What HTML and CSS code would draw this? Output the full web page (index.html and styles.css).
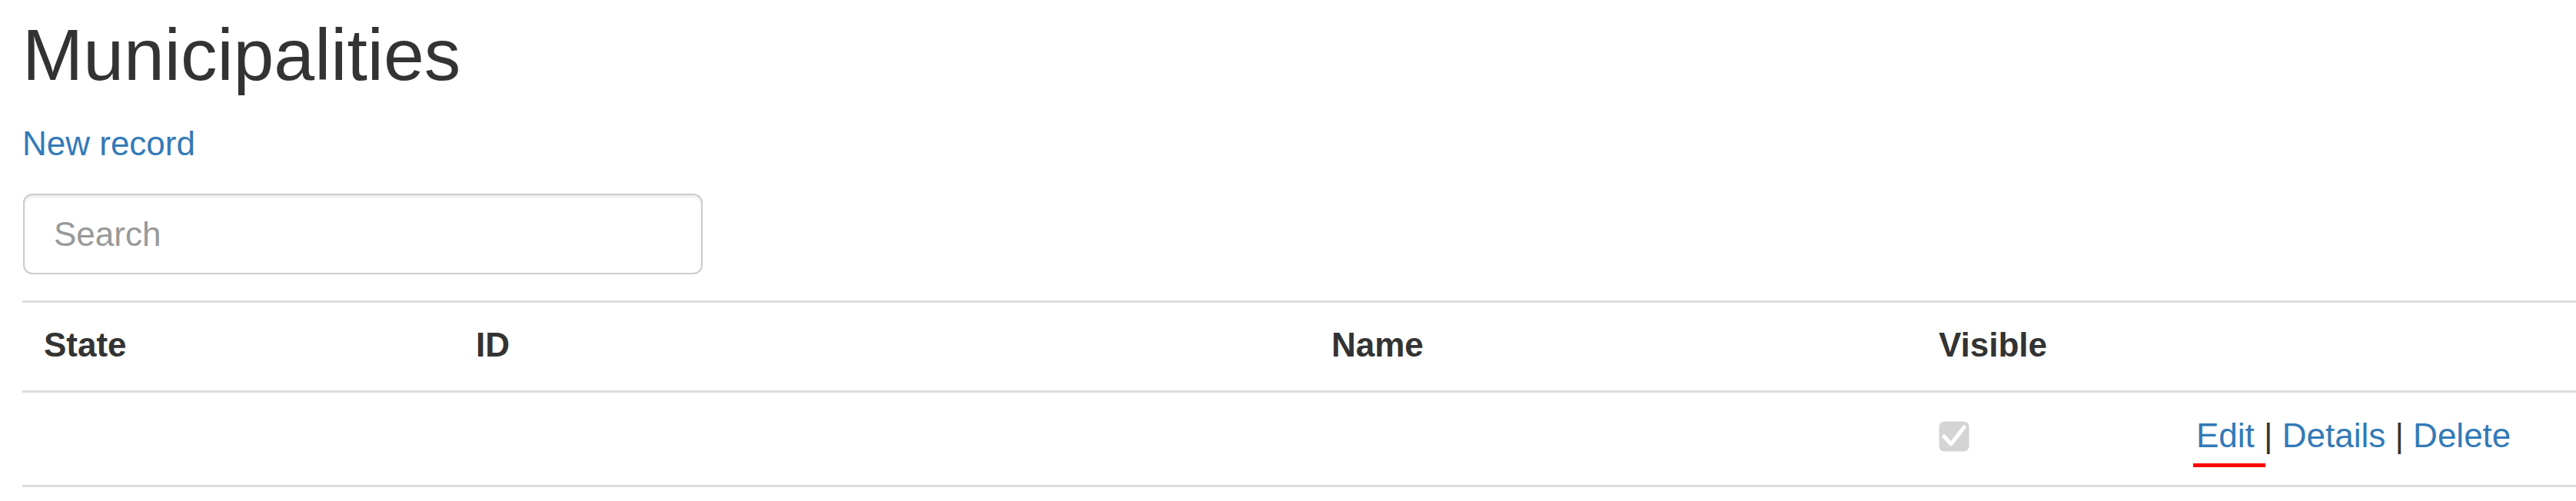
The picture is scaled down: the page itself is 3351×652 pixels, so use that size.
FILE: index.html
```html
<!DOCTYPE html>
<html lang="en">
<head>
<meta charset="utf-8">
<title>Municipalities</title>
<link rel="stylesheet" href="styles.css">
</head>
<body>
<div class="page">
  <h2 class="title">Municipalities</h2>
  <p class="new"><a class="link" href="#">New record</a></p>
  <form class="search">
    <input class="search-input" type="text" placeholder="Search">
  </form>
  <table class="grid">
    <colgroup>
      <col class="c-state">
      <col class="c-id">
      <col class="c-name">
      <col class="c-visible">
      <col class="c-actions">
    </colgroup>
    <thead>
      <tr>
        <th>State</th>
        <th>ID</th>
        <th>Name</th>
        <th>Visible</th>
        <th></th>
      </tr>
    </thead>
    <tbody>
      <tr>
        <td></td>
        <td></td>
        <td></td>
        <td><span class="check"><svg width="40" height="40" viewBox="0 0 40 40"><rect x="0.5" y="0.5" width="39" height="39" rx="7" fill="#d4d4d4"/><path d="M7 20 L16 30 L33 8" fill="none" stroke="#ffffff" stroke-width="5" stroke-linecap="round" stroke-linejoin="round"/></svg></span></td>
        <td class="actions"><a class="link edit" href="#">Edit</a> | <a class="link" href="#">Details</a> | <a class="link" href="#">Delete</a></td>
      </tr>
    </tbody>
  </table>
</div>
</body>
</html>
```

FILE: styles.css
```css
html, body {
  margin: 0;
  background: #ffffff;
}

body {
  font-family: "Liberation Sans", Arial, Helvetica, sans-serif;
  font-size: 44px;
  line-height: 62px;
  color: #333333;
}

.page {
  padding: 19px 0 0 29px;
}

.title {
  margin: 0;
  font-size: 95px;
  line-height: 104px;
  font-weight: normal;
  color: #333333;
}

.new {
  margin: 33px 0 0;
}

.link {
  color: #337ab7;
  text-decoration: none;
}

.search {
  margin: 34px 0 0;
}

.search-input {
  display: block;
  box-sizing: border-box;
  width: 884px;
  height: 105px;
  margin: 0 0 0 1px;
  padding: 0 38px;
  border: 2px solid #cccccc;
  border-radius: 12px;
  box-shadow: inset 0 3px 3px rgba(0, 0, 0, 0.075);
  font-family: inherit;
  font-size: 44px;
  color: #555555;
  background: #ffffff;
  outline: none;
}

.search-input::placeholder {
  color: #999999;
}

.grid {
  width: 100%;
  margin-top: 34px;
  table-layout: fixed;
  border-collapse: separate;
  border-spacing: 0;
}

.c-state { width: 562px; }
.c-id { width: 1113px; }
.c-name { width: 790px; }
.c-visible { width: 335px; }

.grid th {
  text-align: left;
  vertical-align: top;
  font-weight: bold;
  padding: 24px 28px 28px;
  border-top: 3px solid #dddddd;
  border-bottom: 3px solid #dddddd;
}

.grid td {
  vertical-align: top;
  padding: 25px 28px 33px;
  border-bottom: 3px solid #dddddd;
}

.check {
  display: inline-block;
  vertical-align: top;
  width: 40px;
  height: 40px;
  margin-top: 12px;
}

.check svg {
  display: block;
}

.actions {
  white-space: nowrap;
}

.edit {
  position: relative;
  display: inline-block;
}

.edit::after {
  content: "";
  position: absolute;
  left: -4px;
  top: 67px;
  width: 94px;
  height: 5px;
  background: #ff0000;
}
```
